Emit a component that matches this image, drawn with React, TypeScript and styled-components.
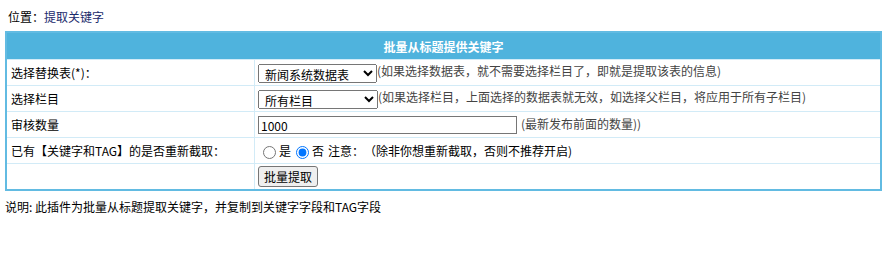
import styled, { createGlobalStyle } from "styled-components";

const GlobalStyle = createGlobalStyle`
  body {
    margin: 0;
    font-family: "Noto Sans CJK SC", "Noto Sans", sans-serif;
    font-size: 12px;
    color: #000;
    background: #fff;
  }
`;

const Page = styled.div`
  padding: 8px 5px;
`;

const Place = styled.div`
  padding-left: 3px;
  height: 20px;
  line-height: 18px;
  margin-bottom: 3px;
  a {
    color: #1a2a6c;
    text-decoration: none;
  }
`;

const Table = styled.table`
  width: 100%;
  border-collapse: separate;
  border-spacing: 0;
  border: 2px solid #62bbe2;
`;

const HeadCell = styled.td`
  background: #4fb3dd;
  color: #fff;
  font-weight: bold;
  text-align: center;
  height: 26px;
  padding: 0;
`;

const Label = styled.td`
  width: 243px;
  height: 25px;
  padding: 0 0 0 4px;
  border-top: 1px solid #d2ebf7;
  border-right: 1px solid #d2ebf7;
`;

const Field = styled.td`
  padding: 0 0 0 3px;
  border-top: 1px solid #d2ebf7;
  color: #444;
`;

const Select = styled.select<{ $w: number }>`
  width: ${(p) => p.$w}px;
  height: 19px;
  font-family: inherit;
  font-size: 12px;
  padding: 0 2px;
  vertical-align: middle;
  color: #000;
`;

const Input = styled.input`
  width: 253px;
  height: 16px;
  font-family: inherit;
  font-size: 12px;
  padding: 0 2px;
  border: 1px solid #767676;
  vertical-align: middle;
  margin-right: 4px;
  color: #000;
`;

const Radio = styled.input`
  margin: 0 3px 0 5px;
  vertical-align: middle;
`;

const Choice = styled.span`
  color: #000;
`;

const Note = styled.span`
  color: #000;
  margin-left: 4px;
  text-spacing-trim: space-all;
`;

const Button = styled.button`
  font-family: inherit;
  font-size: 12px;
  height: 21px;
  padding: 0 5px;
  margin: 2px 0;
  border: 1px solid #767676;
  border-radius: 3px;
  background: #efefef;
  color: #000;
`;

const Footer = styled.div`
  padding-top: 7px;
  line-height: 18px;
`;

function App() {
  return (
    <Page>
      <GlobalStyle />
      <Place>
        位置：<a href="#">提取关键字</a>
      </Place>
      <Table>
        <tbody>
          <tr>
            <HeadCell colSpan={2}>批量从标题提供关键字</HeadCell>
          </tr>
          <tr>
            <Label>选择替换表(*)：</Label>
            <Field>
              <Select $w={119} defaultValue="news">
                <option value="news">新闻系统数据表</option>
              </Select>
              (如果选择数据表，就不需要选择栏目了，即就是提取该表的信息)
            </Field>
          </tr>
          <tr>
            <Label>选择栏目</Label>
            <Field>
              <Select $w={120} defaultValue="all">
                <option value="all">所有栏目</option>
              </Select>
              (如果选择栏目，上面选择的数据表就无效，如选择父栏目，将应用于所有子栏目)
            </Field>
          </tr>
          <tr>
            <Label>审核数量</Label>
            <Field>
              <Input defaultValue="1000" />
              (最新发布前面的数量))
            </Field>
          </tr>
          <tr>
            <Label>已有【关键字和TAG】的是否重新截取：</Label>
            <Field>
              <Radio type="radio" name="re" />
              <Choice>是</Choice>
              <Radio type="radio" name="re" defaultChecked />
              <Choice>否</Choice>
              <Note>注意：（除非你想重新截取，否则不推荐开启)</Note>
            </Field>
          </tr>
          <tr>
            <Label />
            <Field>
              <Button>批量提取</Button>
            </Field>
          </tr>
        </tbody>
      </Table>
      <Footer>说明: 此插件为批量从标题提取关键字，并复制到关键字字段和TAG字段</Footer>
    </Page>
  );
}

export default App;
